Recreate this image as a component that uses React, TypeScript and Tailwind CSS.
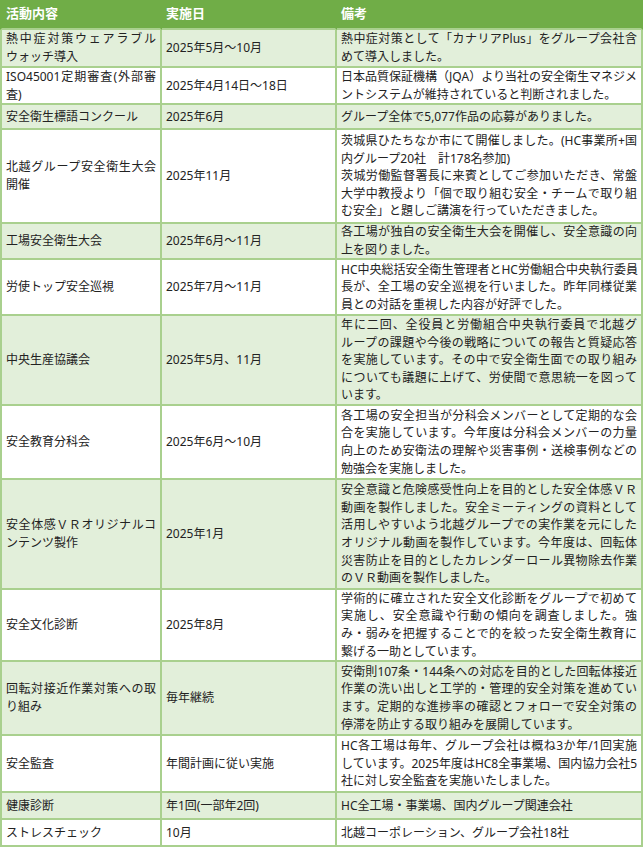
import React from "react";

type Row = {
  h: string;
  shade: boolean;
  a: string[];
  b: string[];
  c: string[];
};

const rows: Row[] = [
  {
    h: "h-[38px]",
    shade: true,
    a: ["熱中症対策ウェアラブル", "ウォッチ導入"],
    b: ["2025年5月～10月"],
    c: ["熱中症対策として「カナリアPlus」をグループ会社含", "めて導入しました。"],
  },
  {
    h: "h-[37px]",
    shade: false,
    a: ["ISO45001定期審査(外部審", "査)"],
    b: ["2025年4月14日～18日"],
    c: ["日本品質保証機構（JQA）より当社の安全衛生マネジメ", "ントシステムが維持されていると判断されました。"],
  },
  {
    h: "h-[25px]",
    shade: true,
    a: ["安全衛生標語コンクール"],
    b: ["2025年6月"],
    c: ["グループ全体で5,077作品の応募がありました。"],
  },
  {
    h: "h-[94px]",
    shade: false,
    a: ["北越グループ安全衛生大会", "開催"],
    b: ["2025年11月"],
    c: [
      "茨城県ひたちなか市にて開催しました。(HC事業所+国",
      "内グループ20社　計178名参加)|",
      "茨城労働監督署長に来賓としてご参加いただき、常盤",
      "大学中教授より「個で取り組む安全・チームで取り組",
      "む安全」と題しご講演を行っていただきました。",
    ],
  },
  {
    h: "h-[36px]",
    shade: true,
    a: ["工場安全衛生大会"],
    b: ["2025年6月～11月"],
    c: ["各工場が独自の安全衛生大会を開催し、安全意識の向", "上を図りました。"],
  },
  {
    h: "h-[56px]",
    shade: false,
    a: ["労使トップ安全巡視"],
    b: ["2025年7月～11月"],
    c: [
      "HC中央総括安全衛生管理者とHC労働組合中央執行委員",
      "長が、全工場の安全巡視を行いました。昨年同様従業",
      "員との対話を重視した内容が好評でした。",
    ],
  },
  {
    h: "h-[90px]",
    shade: true,
    a: ["中央生産協議会"],
    b: ["2025年5月、11月"],
    c: [
      "年に二回、全役員と労働組合中央執行委員で北越グ",
      "ループの課題や今後の戦略についての報告と質疑応答",
      "を実施しています。その中で安全衛生面での取り組み",
      "についても議題に上げて、労使間で意思統一を図って",
      "います。",
    ],
  },
  {
    h: "h-[74px]",
    shade: false,
    a: ["安全教育分科会"],
    b: ["2025年6月～10月"],
    c: [
      "各工場の安全担当が分科会メンバーとして定期的な会",
      "合を実施しています。今年度は分科会メンバーの力量",
      "向上のため安衛法の理解や災害事例・送検事例などの",
      "勉強会を実施しました。",
    ],
  },
  {
    h: "h-[110px]",
    shade: true,
    a: ["安全体感ＶＲオリジナルコ", "ンテンツ製作"],
    b: ["2025年1月"],
    c: [
      "安全意識と危険感受性向上を目的とした安全体感ＶＲ",
      "動画を製作しました。安全ミーティングの資料として",
      "活用しやすいよう北越グループでの実作業を元にした",
      "オリジナル動画を製作しています。今年度は、回転体",
      "災害防止を目的としたカレンダーロール異物除去作業",
      "のＶＲ動画を製作しました。",
    ],
  },
  {
    h: "h-[72px]",
    shade: false,
    a: ["安全文化診断"],
    b: ["2025年8月"],
    c: [
      "学術的に確立された安全文化診断をグループで初めて",
      "実施し、安全意識や行動の傾向を調査しました。強",
      "み・弱みを把握することで的を絞った安全衛生教育に",
      "繋げる一助としています。",
    ],
  },
  {
    h: "h-[74px]",
    shade: true,
    a: ["回転対接近作業対策への取", "り組み"],
    b: ["毎年継続"],
    c: [
      "安衛則107条・144条への対応を目的とした回転体接近",
      "作業の洗い出しと工学的・管理的安全対策を進めてい",
      "ます。定期的な進捗率の確認とフォローで安全対策の",
      "停滞を防止する取り組みを展開しています。",
    ],
  },
  {
    h: "h-[57px]",
    shade: false,
    a: ["安全監査"],
    b: ["年間計画に従い実施"],
    c: [
      "HC各工場は毎年、グループ会社は概ね3か年/1回実施",
      "しています。2025年度はHC8全事業場、国内協力会社5",
      "社に対し安全監査を実施いたしました。",
    ],
  },
  {
    h: "h-[27px]",
    shade: true,
    a: ["健康診断"],
    b: ["年1回(一部年2回)"],
    c: ["HC全工場・事業場、国内グループ関連会社"],
  },
  {
    h: "h-[27px]",
    shade: false,
    a: ["ストレスチェック"],
    b: ["10月"],
    c: ["北越コーポレーション、グループ会社18社"],
  },
];

function Lines({ lines }: { lines: string[] }) {
  return (
    <>
      {lines.map((raw, i) => {
        const hardEnd = raw.endsWith("|");
        const text = hardEnd ? raw.slice(0, -1) : raw;
        const justify = i < lines.length - 1 && !hardEnd;
        return (
          <div
            key={i}
            className={
              justify
                ? "whitespace-nowrap text-justify [text-align-last:justify]"
                : "whitespace-nowrap text-left"
            }
          >
            {text}
          </div>
        );
      })}
    </>
  );
}

export default function App() {
  const cellBase =
    "border-r-2 border-b-2 border-[#a9d08e] px-1 flex flex-col justify-center";
  return (
    <div
      lang="ja"
      className="w-[644px] bg-white text-[12px] leading-[17.6px] text-[#222222] [font-family:'Noto_Sans','Noto_Sans_CJK_JP',sans-serif]"
    >
      <div className="w-[643px] grid grid-cols-[162px_175px_306px]">
        <div className="h-[30px] bg-[#70ad47] border-l-2 border-r-2 border-b-2 border-l-[#70ad47] border-r-[#70ad47] border-b-[#a9d08e] px-1 flex items-center text-white font-bold text-[13px]">
          活動内容
        </div>
        <div className="h-[30px] bg-[#70ad47] border-r-2 border-b-2 border-r-[#70ad47] border-b-[#a9d08e] px-1 flex items-center text-white font-bold text-[13px]">
          実施日
        </div>
        <div className="h-[30px] bg-[#70ad47] border-r-2 border-b-2 border-r-[#70ad47] border-b-[#a9d08e] px-1 flex items-center text-white font-bold text-[13px]">
          備考
        </div>
        {rows.map((r, idx) => {
          const bg = r.shade ? "bg-[#e2efda]" : "bg-white";
          return (
            <React.Fragment key={idx}>
              <div className={`${r.h} ${bg} ${cellBase} border-l-2`}>
                <Lines lines={r.a} />
              </div>
              <div className={`${r.h} ${bg} ${cellBase}`}>
                <Lines lines={r.b} />
              </div>
              <div className={`${r.h} ${bg} ${cellBase}`}>
                <Lines lines={r.c} />
              </div>
            </React.Fragment>
          );
        })}
      </div>
    </div>
  );
}
